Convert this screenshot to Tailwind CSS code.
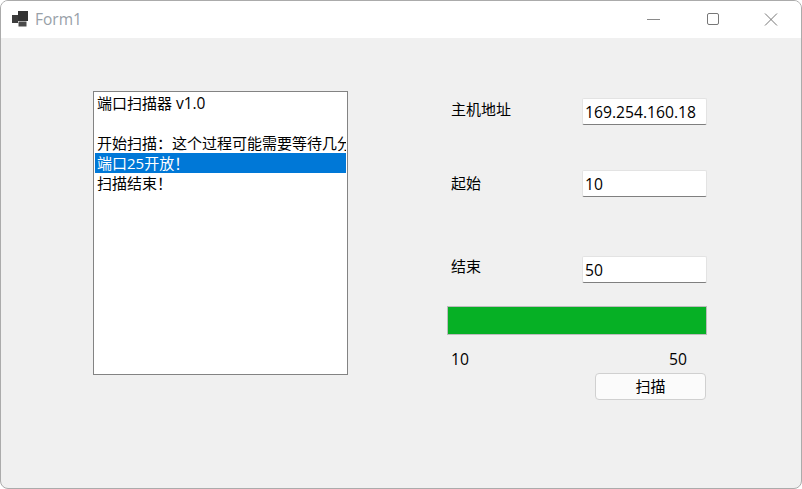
<!DOCTYPE html>
<html lang="zh-CN">
<head>
    <meta charset="UTF-8">
    <title>Form1</title>
    <script src="https://cdn.jsdelivr.net/npm/@tailwindcss/browser@4"></script>
</head>
<body class="bg-white overflow-hidden font-['Open_Sans','Noto_Sans_CJK_SC',sans-serif] text-[15px] text-black">
<div class="w-[802px] h-[489px] bg-[#f0f0f0] border border-[#ababab] rounded-[8px] overflow-hidden flex flex-col">
    <!-- Title bar -->
    <div class="h-[37px] bg-white flex items-center shrink-0">
        <svg class="ml-[11px] mt-[-1px]" width="17" height="16" viewBox="0 0 17 16">
            <rect x="0" y="4" width="6" height="8" fill="#3c3c3c"/>
            <rect x="6" y="0" width="10" height="10" fill="#333333"/>
            <rect x="6.5" y="10.5" width="8" height="5" fill="#4a4a4a"/>
        </svg>
        <span class="ml-[6px] text-[#98a0a8] text-[15.5px]">Form1</span>
        <div class="ml-auto flex items-start mr-[7px] mt-[-8px]">
            <svg width="46" height="30" viewBox="0 0 46 30"><path d="M15 18.5h13" stroke="#8a8a8a" fill="none"/></svg>
            <svg width="46" height="30" viewBox="0 0 46 30" class="ml-[12px]"><rect x="17.5" y="12.5" width="11" height="11" rx="1.5" stroke="#777" fill="none"/></svg>
            <svg width="46" height="30" viewBox="0 0 46 30" class="ml-[12px]"><path d="M17 12.5l12 12M29 12.5l-12 12" stroke="#777" fill="none"/></svg>
        </div>
    </div>
    <!-- Form body -->
    <div class="flex items-start pl-[92px] pt-[53px]">
        <div class="w-[255px] h-[284px] bg-white border border-[#838383] pl-px pr-px pt-px leading-[20px] whitespace-nowrap overflow-hidden">
            <div class="h-[20px] pl-[2px]">端口扫描器 <span class="text-[15.5px]">v1.0</span></div>
            <div class="h-[20px]"></div>
            <div class="h-[20px] pl-[2px] overflow-hidden">开始扫描：这个过程可能需要等待几分钟</div>
            <div class="h-[20px] pl-[2px] bg-[#0078d7] text-white">端口25开放！</div>
            <div class="h-[20px] pl-[2px]">扫描结束！</div>
        </div>
        <div class="w-[260px] ml-[99px] flex flex-col">
            <div class="flex justify-between items-start h-[79px] pt-[7px]">
                <span class="pl-[4px] leading-[20px] mt-px">主机地址</span>
                <div class="w-[125px] h-[27px] bg-white border border-[#e3e3e3] border-b-[#7f7f7f] rounded-[2px] pl-[2px] leading-[26px] text-[15.7px]">169.254.160.18</div>
            </div>
            <div class="flex justify-between items-start h-[86px]">
                <span class="pl-[4px] leading-[20px] mt-[3px]">起始</span>
                <div class="w-[125px] h-[27px] bg-white border border-[#e3e3e3] border-b-[#7f7f7f] rounded-[2px] pl-[2px] leading-[26px] text-[15.7px]">10</div>
            </div>
            <div class="flex justify-between items-start h-[50px]">
                <span class="pl-[4px] leading-[20px]">结束</span>
                <div class="w-[125px] h-[27px] bg-white border border-[#e3e3e3] border-b-[#7f7f7f] rounded-[2px] pl-[2px] leading-[26px] text-[15.7px]">50</div>
            </div>
            <div class="h-[29px] bg-[#06b025] border border-[#bcbcbc]"></div>
            <div class="flex justify-between pl-[4px] pr-[20px] mt-[14px] leading-[20px] text-[15.7px]">
                <span>10</span>
                <span>50</span>
            </div>
            <div class="flex justify-end pr-px mt-[4px]">
                <div class="w-[111px] h-[27px] bg-[#fbfbfb] border border-[#d0d0d0] rounded-[4px] text-center leading-[25px]">扫描</div>
            </div>
        </div>
    </div>
</div>
</body>
</html>
